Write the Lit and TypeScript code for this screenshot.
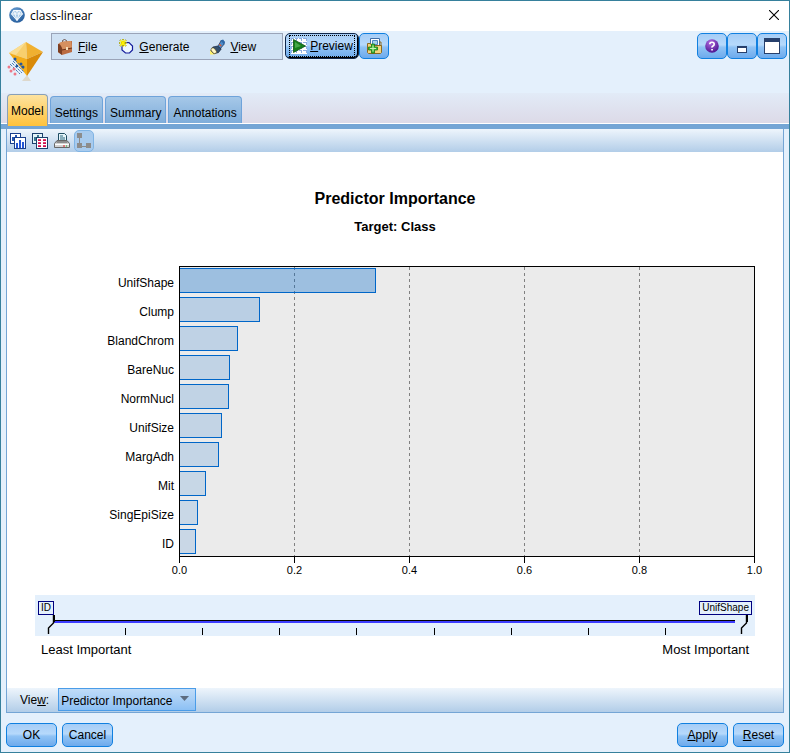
import { LitElement, html, css } from "lit";
import { customElement, state } from "lit/decorators.js";
import { classMap } from "lit/directives/class-map.js";
import { styleMap } from "lit/directives/style-map.js";

interface Predictor {
  name: string;
  value: number;
}

const PREDICTORS: Predictor[] = [
  { name: "UnifShape", value: 0.342 },
  { name: "Clump", value: 0.14 },
  { name: "BlandChrom", value: 0.101 },
  { name: "BareNuc", value: 0.087 },
  { name: "NormNucl", value: 0.086 },
  { name: "UnifSize", value: 0.074 },
  { name: "MargAdh", value: 0.068 },
  { name: "Mit", value: 0.046 },
  { name: "SingEpiSize", value: 0.032 },
  { name: "ID", value: 0.028 },
];

const AXIS = ["0.0", "0.2", "0.4", "0.6", "0.8", "1.0"];
const TABS = ["Model", "Settings", "Summary", "Annotations"];

const appIcon = html`<svg width="16" height="16" viewBox="0 0 16 16">
  <defs><radialGradient id="a" cx=".4" cy=".3" r=".8">
    <stop offset="0" stop-color="#6fa3d6" /><stop offset="1" stop-color="#1d5596" />
  </radialGradient></defs>
  <circle cx="8" cy="8" r="7.8" fill="url(#a)" />
  <path d="M4.5 3.500h7L13.500 7 8 13.500 2.500 7z" fill="#a9cbe8" stroke="#fff" stroke-width=".9" />
  <path d="M2.500 7h11M4.500 3.500 6 7l2 6.500L10 7l1.500-3.500M6 7l2-3.500L10 7" fill="none" stroke="#fff" stroke-width=".8" />
</svg>`;

const nuggetIcon = html`<svg width="38" height="42" viewBox="0 0 38 42">
  <path d="M15 40h9l-4-6z" fill="#ddd8cc" />
  <path d="M19 1 2 12 20 18z" fill="#f8cf6d" />
  <path d="M19 1 2 12l7 2z" fill="#fadd92" />
  <path d="M19 1 36 11 20 18z" fill="#f0b030" />
  <path d="M2 12 20 18 20 35z" fill="#f4ad1a" />
  <path d="M36 11 20 18 20 35z" fill="#d98a08" />
  <path d="M2 19h5l10 12-4 4L0 24z" fill="#e4f0fc" />
  <path d="m6 20 11 11M5 22l10 10M3 23l10 10M8 19l9 9" stroke="#3f6fa8" stroke-width=".9" stroke-dasharray="3 1" />
  <g fill="#2458a0"><circle cx="8" cy="18" r="1.500" /><circle cx="14" cy="23" r="1.500" /><circle cx="16" cy="26" r="1.500" /><circle cx="10" cy="25" r="1.300" /></g>
  <g fill="#ee7686"><circle cx="2" cy="26" r="1.500" /><circle cx="7" cy="28" r="1.500" /><circle cx="4" cy="30" r="1.500" /><circle cx="8" cy="33" r="1.500" /></g>
</svg>`;

const fileIcon = html`<svg width="16" height="16" viewBox="0 0 16 16">
  <path d="M5.500 4V1.500Q7.500-.5 9.500 1.500V3" fill="none" stroke="#6a5148" />
  <path d="m1 5 4-2 10-1v11l-10 3-4-3z" fill="#bb6c42" />
  <path d="m1 5 4 1v10l-4-3z" fill="#7d3f22" />
  <path d="m2 4 4-1.500L14 2l1 7-9 2-2-4z" fill="#d6905f" />
  <path d="M5 11 15 9" stroke="#6b3219" />
  <rect x="9" y="8" width="2" height="3" fill="#f4dcb8" />
</svg>`;

const generateIcon = html`<svg width="16" height="16" viewBox="-2 0 16 16">
  <path d="M5 3.600h4l3.500 3.400v4l-3 3h-4l-3.500-3V8z" fill="#eef8ff" stroke="#141c9c" stroke-width="1.200" />
  <path d="M3 0v8M-1 4h8M0 1l6 6M6 1 0 7" stroke="#4a4a10" stroke-width="1.600" stroke-dasharray="1 1" />
  <path d="M3 0v8M-1 4h8M0 1l6 6M6 1 0 7" stroke="#fff200" stroke-width="1.100" />
</svg>`;

const torchIcon = html`<svg width="15" height="16" viewBox="0 0 16 16">
  <path d="m0 11 5 5-5 0z" fill="#fff36a" />
  <path d="m8 8 4-7 3 1v3l-5 6z" fill="#4f8cca" stroke="#1d365c" stroke-width=".8" />
  <path d="m11 1 3-1 2 3-1 2z" fill="#2f68a8" />
  <path d="m3 8 5-1 4 3-3 4-5 1-3-3z" fill="#34506f" stroke="#14243f" stroke-width=".7" />
  <ellipse cx="4" cy="12" rx="2.200" ry="3.600" transform="rotate(-40 4 12)" fill="#fff8c8" stroke="#50400c" stroke-width=".6" />
  <path d="m10 5 2 2" stroke="#e45b2c" stroke-width="1.500" />
</svg>`;

const previewIcon = html`<svg width="16" height="16" viewBox="0 0 16 16">
  <path d="M0 0h16v16H0z" fill="#fff" />
  <path d="M0 .5h16M0 4.500h16M0 8.500h16M0 12.500h16M.5 0v16M5.500 0v16M10.500 0v16M15.500 0v16" stroke="#8faee0" stroke-dasharray="3 1" />
  <path d="M2.500 1.500v13L14.500 8z" fill="#15801c" stroke="#0a5212" stroke-width=".8" />
  <path d="m4 4 6 4-6 2z" fill="#46a84a" />
</svg>`;

const folderIcon = html`<svg width="17" height="16" viewBox="0 0 17 16">
  <path d="M4.500.5h9v10h-9z" fill="#fff" stroke="#3f6ea8" />
  <path d="M6.500 2.500h5v4h-5z" fill="#a8d0ee" stroke="#4b88c0" />
  <path d="M1.500 5.500h3l1 2h10v7l-1 1h-12l-1-1z" fill="#f4d47c" stroke="#8c6a20" />
  <path d="M13 4h2v4" fill="none" stroke="#8c6a20" />
  <path d="M5.500 6h3v3h3v3h-3v3h-3v-3h-3V9h3z" fill="#43bb38" stroke="#157a18" stroke-width=".8" />
  <path d="M7 7.500v6M4 10.500h6" stroke="#c8f4b8" />
</svg>`;

const helpIcon = html`<svg width="14" height="14" viewBox="0 0 14 14">
  <defs><radialGradient id="h" cx=".4" cy=".25" r=".8">
    <stop offset="0" stop-color="#b06ae0" /><stop offset="1" stop-color="#48108c" />
  </radialGradient></defs>
  <circle cx="7" cy="7" r="6.800" fill="url(#h)" />
  <path d="M4.800 5.200Q4.800 3.200 7 3.200T9.200 5.200Q9.200 6.300 8 7T7 8.600" fill="none" stroke="#fff" stroke-width="1.600" />
  <path d="M6.200 10h1.700v1.600H6.200z" fill="#fff" />
</svg>`;

const minimizeIcon = html`<svg width="18" height="16" viewBox="0 0 18 16" shape-rendering="crispEdges">
  <path d="M4.500 8.500h9v6h-9z" fill="#fff" stroke="#27406c" /><path d="M4 8h10v2H4z" fill="#27406c" />
</svg>`;

const maximizeIcon = html`<svg width="16" height="16" viewBox="0 0 16 16" shape-rendering="crispEdges">
  <path d="M.5.5h15v15H.5z" fill="#fff" stroke="#27406c" /><path d="M0 0h16v4H0z" fill="#27406c" />
</svg>`;

const closeIcon = html`<svg width="10" height="10" viewBox="0 0 10 10">
  <path d="m0 0 10 10M10 0 0 10" stroke="#000" stroke-width="1.100" />
</svg>`;

const barsIcon = html`<svg width="16" height="16" viewBox="0 0 16 16" shape-rendering="crispEdges">
  <path d="M.5.5h10v10H.5z" fill="#fff" stroke="#1a3f8c" />
  <path d="M3 4v4M6 2v3" stroke="#2456b4" stroke-width="2" />
  <path d="M4.500 4.500h11v11h-11z" fill="#fff" stroke="#1a3f8c" />
  <path d="M7 10v5M10 7v8M13 9v6" stroke="#2456d4" stroke-width="2" />
</svg>`;

const tableIcon = html`<svg width="16" height="16" viewBox="0 0 16 16" shape-rendering="crispEdges">
  <path d="M.5.5h10v10H.5z" fill="#e4f4f8" stroke="#1a3f6c" />
  <path d="M3 4v4M6 2v3" stroke="#3b7890" stroke-width="2" />
  <path d="M4.500 4.500h11v11h-11z" fill="#fff" stroke="#1a3f6c" />
  <path d="M6 7.500h8M6 10.500h8M6 13.500h8" stroke="#d01050" stroke-dasharray="3 2" />
  <path d="M6 6.500h8M6 9.500h8M6 12.500h8" stroke="#e04070" stroke-dasharray="3 2" />
</svg>`;

const printIcon = html`<svg width="16" height="16" viewBox="0 0 16 16">
  <path d="M4.500 8V.5h6l2 2V8" fill="#e4f4fa" stroke="#1f4d62" />
  <path d="M6 3h3M6 5h5M6 7h5" stroke="#2d6880" />
  <path d="M.5 10.500 3 7.500h10l2.500 3v4h-15z" fill="#d2d2d2" stroke="#666" />
  <path d="M2.500 9h11" stroke="#444" /><path d="M1 11.500h14" stroke="#fff" />
  <path d="M9 13h2" stroke="#d22" /><path d="M12 13h1" stroke="#2a2" />
</svg>`;

const treeIcon = html`<svg width="16" height="16" viewBox="0 0 16 16" shape-rendering="crispEdges">
  <path d="M3.500 2v11H14" fill="none" stroke="#8c8c8c" />
  <path d="M1 0h5v5H1zM1 10h5v5H1zM10 10h5v5h-5z" fill="#8c8c8c" />
</svg>`;

@customElement("predictor-chart")
export class PredictorChart extends LitElement {
  static styles = css`
    :host { display: block; padding: 37px 28px 12px; color: #000; }
    h1, h2 { margin: 0; text-align: center; font-weight: bold; }
    h1 { font-size: 16px; line-height: 20px; }
    h2 { font-size: 13px; line-height: 20px; margin: 8px 0 29px; }
    .chart { display: grid; grid-template-columns: 144px 1fr; }
    .names { padding-top: 1px; }
    .name { height: 29px; line-height: 32px; font-size: 12px; text-align: right; padding-right: 5px; }
    .plot { position: relative; height: 291px; box-sizing: border-box; border: 1px solid #000; background: #ebebeb; }
    .grid { position: absolute; inset: 0 0 0 -1px; display: grid; grid-template-columns: repeat(5, 1fr); }
    .line + .line { background: repeating-linear-gradient(#808080 0 3px, transparent 3px 6px) left / 1px 100% no-repeat; }
    .bars { position: relative; }
    .row { height: 29px; padding-top: 1px; box-sizing: border-box; }
    .row:last-child { height: 28px; }
    .bar { height: 25px; box-sizing: border-box; border: 1px solid #0066c8; border-left: 0; background-clip: padding-box; }
    .axis { grid-column: 2; display: flex; justify-content: space-between; }
    .tick { width: 1px; display: flex; flex-direction: column; align-items: center; font-size: 11px; line-height: 14px; }
    .tick::before { content: ""; width: 1px; height: 6px; background: #000; }
    .strip { position: relative; height: 41px; margin-top: 18px; background: #e4f0fc; }
    .marks { display: flex; justify-content: space-between; padding: 6px 3px 0; }
    output { border: 1px solid #000080; height: 12px; line-height: 12px; font-size: 10px; padding: 0 2px; }
    .rail { height: 2px; margin: 5px 20px 0 19px; border-top: 1px solid #000; background: #3c3cff; }
    .scale { display: flex; justify-content: space-between; margin: 5px 12px 0 13px; }
    .scale i { width: 1px; height: 7px; background: #000; }
    .scale i:first-child, .scale i:last-child { visibility: hidden; }
    input { position: absolute; left: 12px; top: 20px; width: calc(100% - 19px); height: 20px; margin: 0; appearance: none; background: none; pointer-events: none; }
    input::-webkit-slider-thumb {
      appearance: none; width: 8px; height: 20px; pointer-events: auto;
      background: url("data:image/svg+xml,%3Csvg xmlns='http://www.w3.org/2000/svg' width='8' height='20'%3E%3Cpath d='M1.5 19v-6l5-5V0M7.5 0v7' fill='none' stroke='%23000' stroke-width='1.4'/%3E%3C/svg%3E") no-repeat;
    }
    .ends { display: flex; justify-content: space-between; padding: 4px 6px 0; font-size: 13px; line-height: 20px; }
  `;

  @state() private low = 0;
  @state() private high = 9;

  private label(step: number) {
    return PREDICTORS[PREDICTORS.length - 1 - step].name;
  }

  render() {
    return html`
      <h1>Predictor Importance</h1>
      <h2>Target: Class</h2>
      <div class="chart">
        <div class="names">${PREDICTORS.map((p) => html`<div class="name">${p.name}</div>`)}</div>
        <div class="plot">
          <div class="grid">${AXIS.slice(1).map(() => html`<div class="line"></div>`)}</div>
          <div class="bars">
            ${PREDICTORS.map((p) => html`<div class="row"><div class="bar" style=${styleMap({
              width: `${p.value * 100}%`,
              backgroundColor: `rgba(0, 102, 204, ${0.125 + p.value * 0.6})`,
            })}></div></div>`)}
          </div>
        </div>
        <div class="axis">${AXIS.map((t) => html`<div class="tick">${t}</div>`)}</div>
      </div>
      <div class="strip">
        <div class="marks"><output>${this.label(this.low)}</output><output>${this.label(this.high)}</output></div>
        <div class="rail"></div>
        <div class="scale">${PREDICTORS.map(() => html`<i></i>`)}</div>
        <input type="range" aria-label="Least important" min="0" max="9" .value=${String(this.low)}
          @input=${(e: Event) => (this.low = Number((e.target as HTMLInputElement).value))} />
        <input type="range" aria-label="Most important" min="0" max="9" .value=${String(this.high)}
          @input=${(e: Event) => (this.high = Number((e.target as HTMLInputElement).value))} />
      </div>
      <div class="ends"><span>Least Important</span><span>Most Important</span></div>
    `;
  }
}

@customElement("app-root")
export class AppRoot extends LitElement {
  static styles = css`
    :host {
      display: flex; flex-direction: column; min-height: 100vh; box-sizing: border-box;
      border: 1px solid #36809c; background: #e4f0fc; color: #000;
      font-family: "Liberation Sans", Arial, sans-serif; font-size: 12px;
    }
    svg { display: block; flex: none; }
    button { font: inherit; color: inherit; margin: 0; padding: 0; border: 0; background: none; display: flex; align-items: center; justify-content: center; box-sizing: border-box; }
    .title { display: flex; align-items: center; height: 30px; box-sizing: border-box; background: #fff; padding: 0 10px 2px 8px; gap: 5px; font-family: "Open Sans", sans-serif; }
    .title span { flex: 1; }
    .head { display: flex; align-items: flex-start; padding: 2px 2px 0 6px; height: 62px; box-sizing: border-box; }
    .nugget { margin-top: 8px; width: 44px; }
    .menu { display: flex; align-items: center; height: 27px; width: 232px; box-sizing: border-box; border: 1px solid #9aa4b8; background: #d0e2f4; padding: 0 5px; gap: 21px; }
    .menu button { gap: 5px; }
    .blue { height: 26px; border: 1px solid #1080e0; border-radius: 5px; background: linear-gradient(#a6cdf6, #b6d9fb 45%, #90c3f5 55%, #6daaec); }
    .preview { width: 74px; margin-left: 2px; border: 1px solid #10284c; box-shadow: inset -1px -1px #000; padding: 0 2px; }
    .preview .focus { display: flex; align-items: center; gap: 3px; height: 20px; border: 1px dotted #000; padding: 0 1px; }
    .tool { width: 30px; }
    .space { flex: 1; }
    .tabs { display: flex; align-items: flex-end; gap: 2px; height: 31px; padding-left: 6px; border-bottom: 5px solid #74a5d5; background: linear-gradient(#e2ebf7, #dcd9e7); box-shadow: inset 0 -1px #fff; }
    .tab { height: 27px; padding: 5px 4px 0; border: 1px solid #6ea3da; border-bottom: 0; border-radius: 4px 4px 0 0; background: linear-gradient(#a6c8e8, #7fadda); margin-bottom: 1px; }
    .tab.on { height: 32px; padding: 0 3px; background: linear-gradient(#fde3a0, #ffc23c); border-color: #88a0b8; margin-bottom: -2px; }
    .panel { flex: 1; display: flex; flex-direction: column; margin: 0 5px; border: 1px solid #74a5d5; border-top: 0; background: #fff; }
    .tools { display: flex; align-items: center; gap: 6px; height: 23px; padding-left: 3px; background: linear-gradient(#eef5fc, #b2cde8); }
    .tools button { height: 22px; }
    .tools .held { width: 20px; margin-left: -2px; border: 1px solid #80b4e4; border-radius: 5px; background: #a8cbee; }
    predictor-chart { flex: 1; }
    .view { display: flex; align-items: flex-start; gap: 9px; height: 24px; padding-left: 13px; background: linear-gradient(#eef5fc, #b2cde8); line-height: 24px; }
    .pick { position: relative; display: flex; }
    select { appearance: none; font: inherit; color: inherit; height: 23px; width: 138px; margin: 0; padding: 0 0 0 2px; border: 1px solid #4a9ce8; border-radius: 0; background: linear-gradient(#c0dcf8, #a8cff6 50%, #8cc0f4); }
    .arrow { position: absolute; right: 7px; top: 8px; pointer-events: none; }
    .foot { display: flex; gap: 5px; padding: 10px 5px 5px; }
    .foot button { width: 51px; height: 24px; }
  `;

  @state() private tab = "Model";

  render() {
    return html`
      <div class="title">${appIcon}<span>class-linear</span><button aria-label="Close">${closeIcon}</button></div>
      <div class="head">
        <div class="nugget">${nuggetIcon}</div>
        <div class="menu">
          <button>${fileIcon}<span><u>F</u>ile</span></button>
          <button>${generateIcon}<span><u>G</u>enerate</span></button>
          <button>${torchIcon}<span><u>V</u>iew</span></button>
        </div>
        <button class="blue preview"><span class="focus">${previewIcon}<span><u>P</u>review</span></span></button>
        <button class="blue tool" aria-label="Add to folder">${folderIcon}</button>
        <div class="space"></div>
        <button class="blue tool" aria-label="Help">${helpIcon}</button>
        <button class="blue tool" aria-label="Minimize">${minimizeIcon}</button>
        <button class="blue tool" aria-label="Maximize">${maximizeIcon}</button>
      </div>
      <div class="tabs" role="tablist">
        ${TABS.map((t) => html`<button role="tab" aria-selected=${t === this.tab}
          class=${classMap({ tab: true, on: t === this.tab })} @click=${() => (this.tab = t)}>${t}</button>`)}
      </div>
      <div class="panel">
        <div class="tools">
          <button aria-label="Chart">${barsIcon}</button>
          <button aria-label="Table">${tableIcon}</button>
          <button aria-label="Print">${printIcon}</button>
          <button class="held" aria-label="Tree">${treeIcon}</button>
        </div>
        <predictor-chart></predictor-chart>
        <div class="view">
          <label for="view">Vie<u>w</u>:</label>
          <div class="pick">
            <select id="view"><option>Predictor Importance</option></select>
            <svg class="arrow" width="9" height="6" viewBox="0 0 9 6"><path d="M0 0h9L4.500 5z" fill="#5c6c80" /></svg>
          </div>
        </div>
      </div>
      <div class="foot">
        <button class="blue">OK</button>
        <button class="blue">Cancel</button>
        <div class="space"></div>
        <button class="blue"><span><u>A</u>pply</span></button>
        <button class="blue"><span><u>R</u>eset</span></button>
      </div>
    `;
  }
}
